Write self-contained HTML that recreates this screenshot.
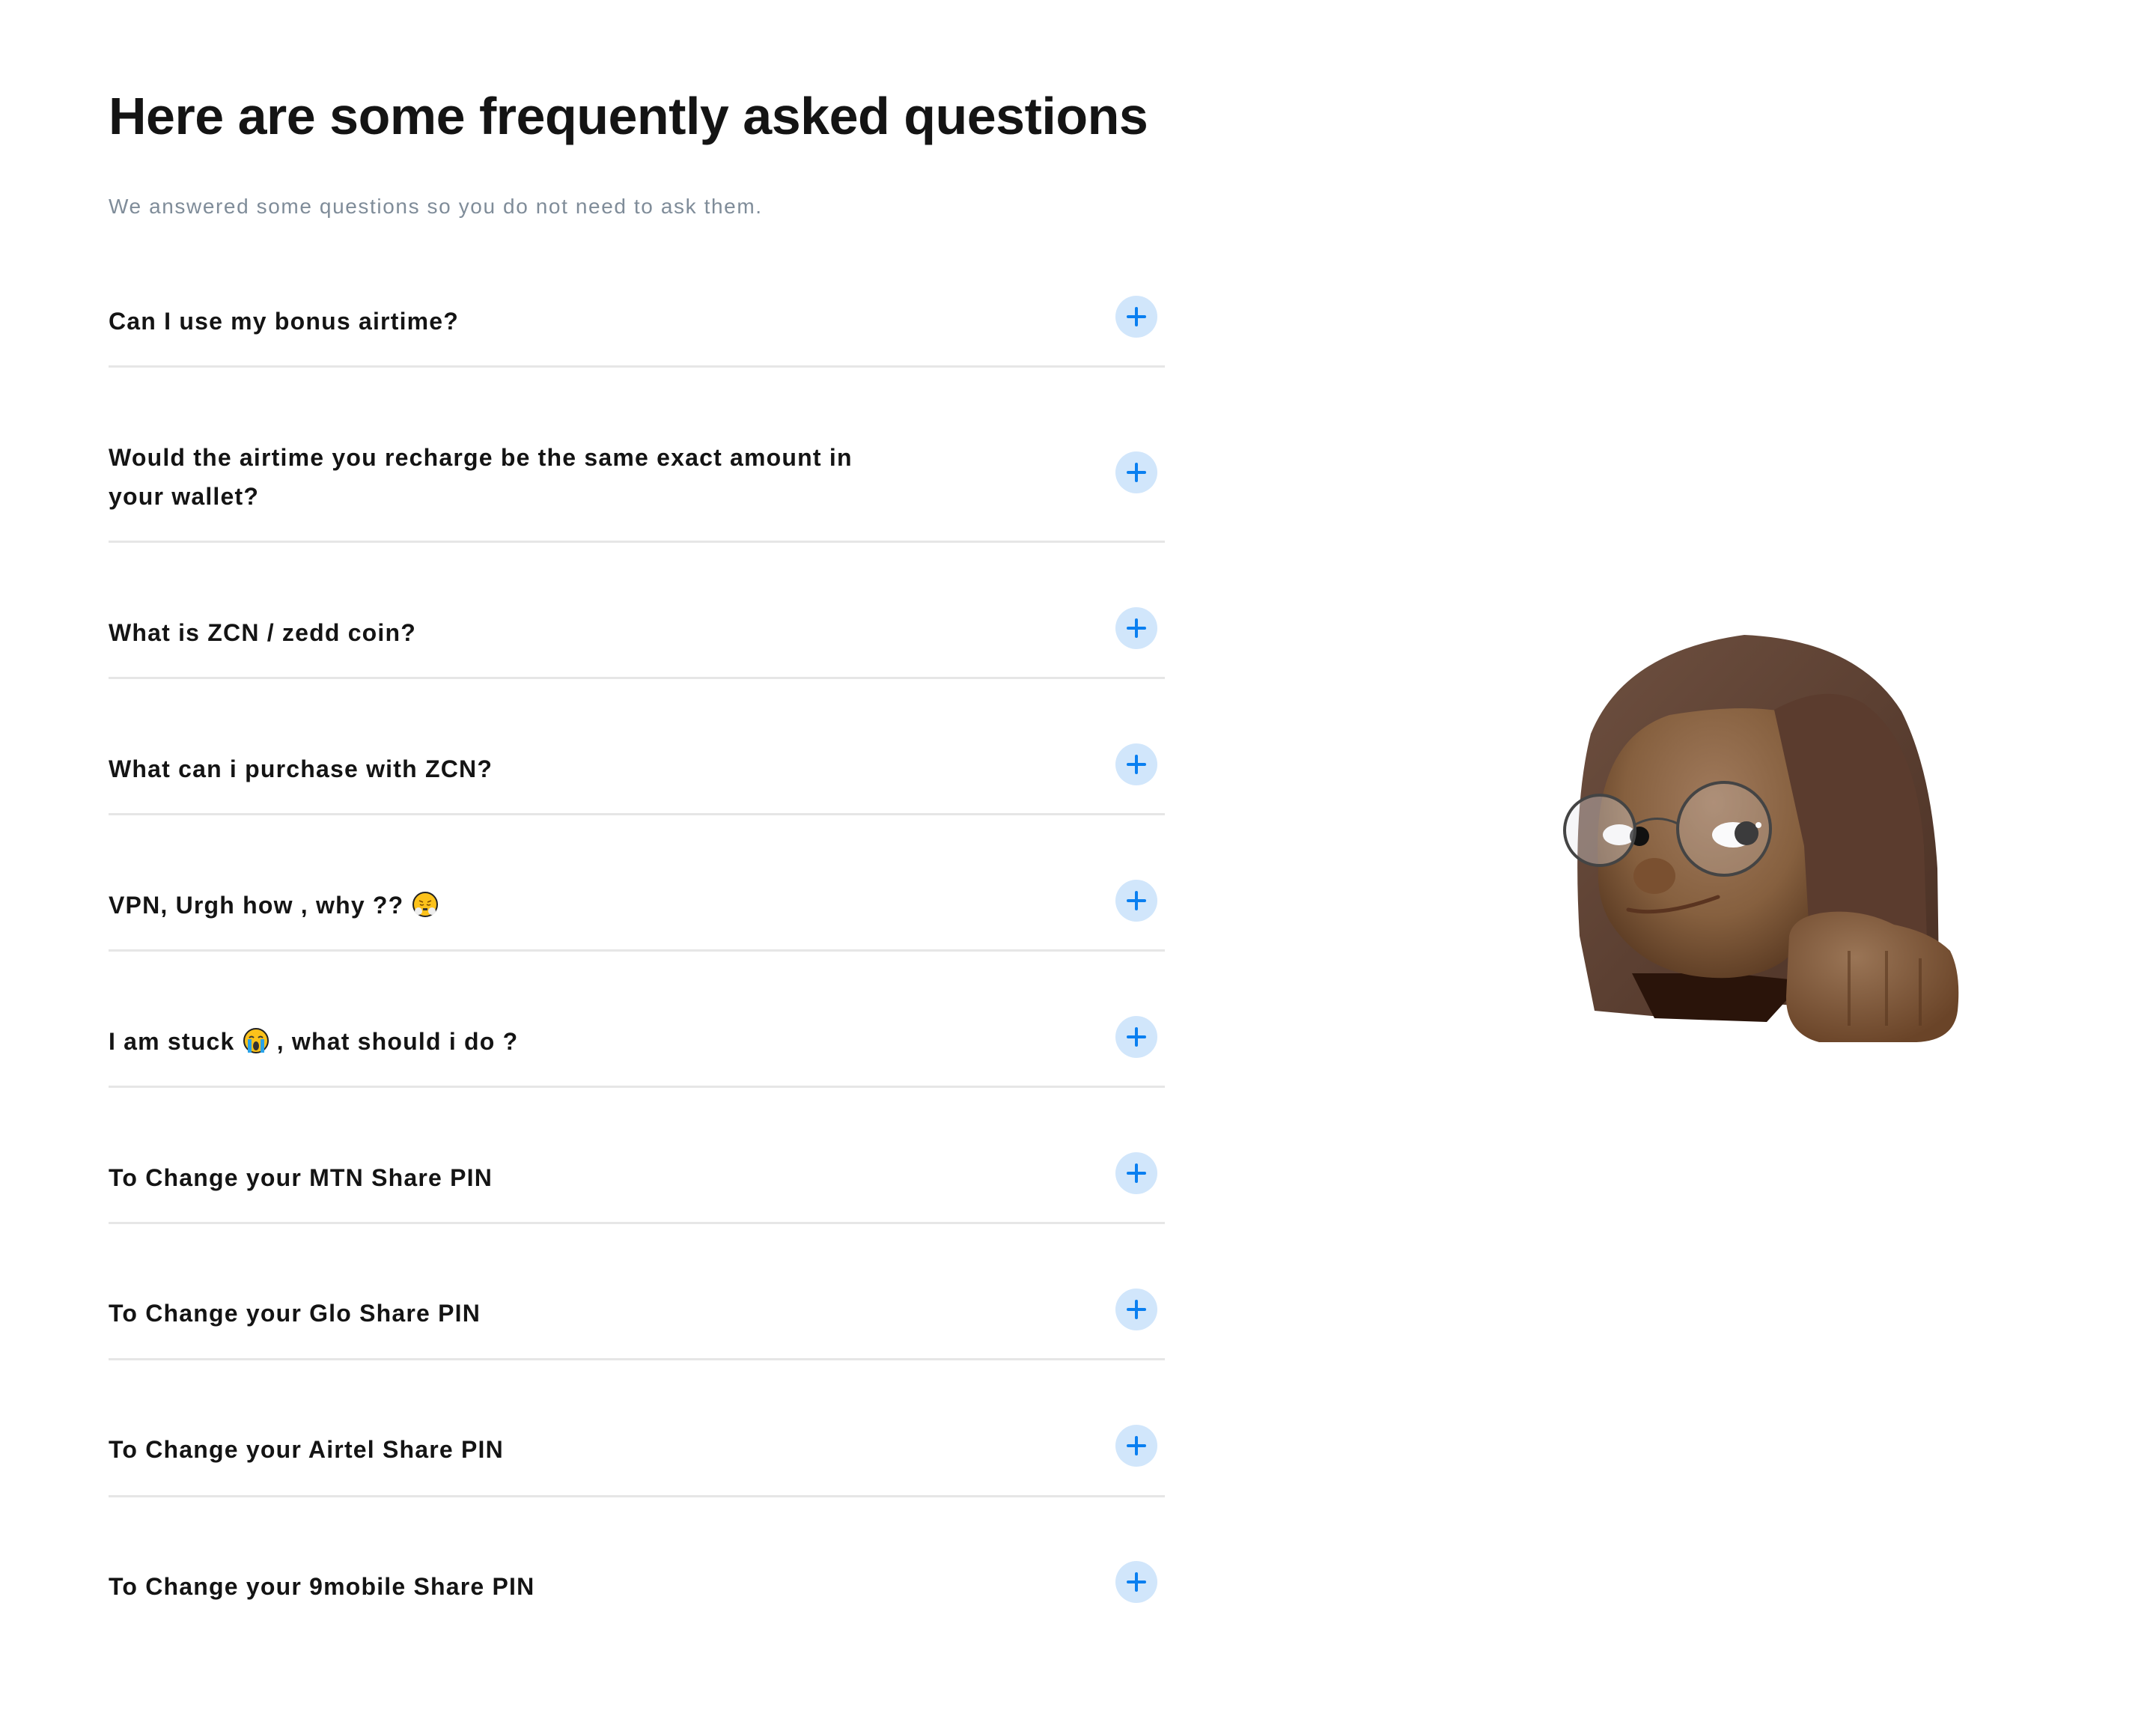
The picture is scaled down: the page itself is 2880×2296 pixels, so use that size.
<!DOCTYPE html>
<html><head><meta charset="utf-8"><style>
html,body{margin:0;padding:0;background:#fff;}
body{width:2880px;height:2296px;position:relative;overflow:hidden;font-family:"Liberation Sans",sans-serif;color:#141414;}
h1{position:absolute;left:145px;top:115px;margin:0;font-size:70px;font-weight:700;letter-spacing:-0.5px;white-space:nowrap;line-height:80px;}
.sub{position:absolute;left:145px;top:258px;font-size:28px;letter-spacing:1.6px;color:#7f8c99;white-space:nowrap;line-height:36px;}
.q{position:absolute;left:145px;font-size:32px;font-weight:700;letter-spacing:1.2px;line-height:52px;white-space:nowrap;}
.btn{position:absolute;left:1490px;width:56px;height:56px;border-radius:50%;background:#d1e6fb;}
.btn:before{content:"";position:absolute;left:15px;top:26px;width:26px;height:4px;border-radius:2px;background:#0a7ff0;}
.btn:after{content:"";position:absolute;left:26px;top:15px;width:4px;height:26px;border-radius:2px;background:#0a7ff0;}
.line{position:absolute;left:145px;width:1411px;height:3px;background:#e6e6e6;}
.em{display:inline-block;vertical-align:-6px;width:36px;height:36px;}
</style></head><body>
<h1>Here are some frequently asked questions</h1>
<div class="sub">We answered some questions so you do not need to ask them.</div>

<div class="q" style="top:403px">Can I use my bonus airtime?</div>
<div class="btn" style="top:395px"></div>
<div class="line" style="top:488px"></div>

<div class="q" style="top:585px">Would the airtime you recharge be the same exact amount in<br>your wallet?</div>
<div class="btn" style="top:603px"></div>
<div class="line" style="top:722px"></div>

<div class="q" style="top:819px">What is ZCN / zedd coin?</div>
<div class="btn" style="top:811px"></div>
<div class="line" style="top:904px"></div>

<div class="q" style="top:1001px">What can i purchase with ZCN?</div>
<div class="btn" style="top:993px"></div>
<div class="line" style="top:1086px"></div>

<div class="q" style="top:1183px">VPN, Urgh how , why ?? <svg class="em" viewBox="0 0 36 36"><circle cx="18" cy="18" r="16" fill="#fcc21b" stroke="#222" stroke-width="2"/><path d="M10 13l5 2M26 13l-5 2M11 18q3 2 5 0M20 18q3 2 5 0" stroke="#7a4a00" stroke-width="1.5" fill="none"/><rect x="15" y="23" width="6" height="3" fill="#333"/><circle cx="9" cy="27" r="5" fill="#eee"/><circle cx="27" cy="27" r="5" fill="#eee"/></svg></div>
<div class="btn" style="top:1175px"></div>
<div class="line" style="top:1268px"></div>

<div class="q" style="top:1365px">I am stuck <svg class="em" viewBox="0 0 36 36"><circle cx="18" cy="18" r="16" fill="#fcc21b" stroke="#222" stroke-width="2"/><path d="M9 14q3-3 6 0M21 14q3-3 6 0" stroke="#333" stroke-width="2" fill="none"/><ellipse cx="18" cy="25" rx="4" ry="6" fill="#333"/><rect x="7" y="16" width="5" height="18" fill="#2aa3e8"/><rect x="24" y="16" width="5" height="18" fill="#2aa3e8"/></svg> , what should i do ?</div>
<div class="btn" style="top:1357px"></div>
<div class="line" style="top:1450px"></div>

<div class="q" style="top:1547px">To Change your MTN Share PIN</div>
<div class="btn" style="top:1539px"></div>
<div class="line" style="top:1632px"></div>

<div class="q" style="top:1728px">To Change your Glo Share PIN</div>
<div class="btn" style="top:1721px"></div>
<div class="line" style="top:1814px"></div>

<div class="q" style="top:1910px">To Change your Airtel Share PIN</div>
<div class="btn" style="top:1903px"></div>
<div class="line" style="top:1997px"></div>

<div class="q" style="top:2093px">To Change your 9mobile Share PIN</div>
<div class="btn" style="top:2085px"></div>

<svg style="position:absolute;left:2060px;top:830px" width="580" height="640" viewBox="0 0 580 640">
 <defs>
  <radialGradient id="sk" cx="0.55" cy="0.35" r="0.7"><stop offset="0" stop-color="#a07a5c"/><stop offset="0.6" stop-color="#86603f"/><stop offset="1" stop-color="#5a3a22"/></radialGradient>
  <linearGradient id="hr" x1="0" y1="0" x2="1" y2="1"><stop offset="0" stop-color="#6e5040"/><stop offset="1" stop-color="#4a3024"/></linearGradient>
  <radialGradient id="fs" cx="0.4" cy="0.35" r="0.7"><stop offset="0" stop-color="#9a7556"/><stop offset="1" stop-color="#6a4428"/></radialGradient>
 </defs>
 <path d="M70 520 L50 420 Q40 250 65 150 Q110 40 270 18 Q420 25 480 120 Q520 200 528 330 L530 470 L420 520 L300 510 L180 530 Z" fill="url(#hr)"/>
 <path d="M120 470 L150 530 L300 535 L350 480 L250 470 Z" fill="#2a140a"/>
 <path d="M75 330 Q65 160 170 125 Q260 110 320 120 L345 140 L356 400 Q340 470 250 476 Q140 480 90 400 Q73 370 75 330Z" fill="url(#sk)"/>
 <path d="M310 118 Q380 80 430 110 Q500 160 510 300 L515 460 L360 470 L350 300 Z" fill="#5b3c2e"/>
 <path d="M115 385 Q160 395 235 368" stroke="#5a3420" stroke-width="5" fill="none" stroke-linecap="round"/>
 <ellipse cx="150" cy="340" rx="28" ry="24" fill="#7a5030"/>
 <ellipse cx="103" cy="285" rx="22" ry="14" fill="#fff"/><circle cx="130" cy="287" r="13" fill="#111"/>
 <ellipse cx="255" cy="285" rx="28" ry="17" fill="#fff"/><circle cx="273" cy="283" r="16" fill="#111"/><circle cx="289" cy="272" r="4" fill="#fff"/>
 <circle cx="77" cy="279" r="47" fill="rgba(230,230,235,0.35)" stroke="#444" stroke-width="4"/>
 <circle cx="243" cy="277" r="62" fill="rgba(230,230,235,0.2)" stroke="#444" stroke-width="4"/>
 <path d="M123 272 Q152 256 181 270" stroke="#444" stroke-width="3" fill="none"/>
 <path d="M330 420 Q335 392 385 388 Q430 385 470 405 Q520 415 545 440 Q560 470 555 520 Q550 560 500 562 L370 562 Q325 550 326 500 Z" fill="url(#fs)"/>
 <path d="M410 440 L410 540 M460 440 L460 540 M505 450 L505 540" stroke="#5a3820" stroke-width="4" opacity="0.6"/>
</svg>
</body></html>
